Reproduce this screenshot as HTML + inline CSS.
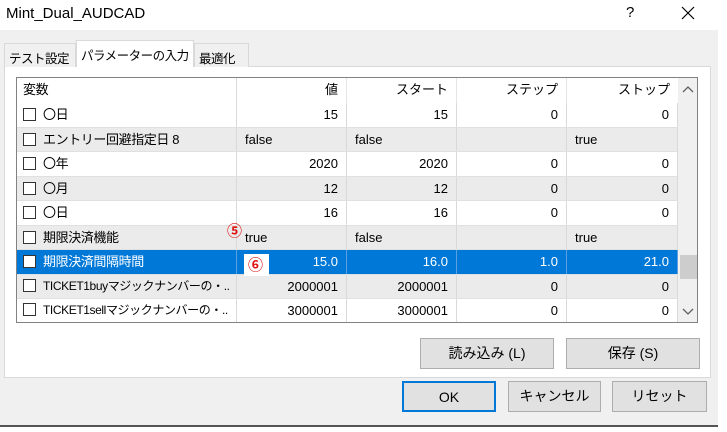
<!DOCTYPE html><html><head><meta charset="utf-8"><style>
*{box-sizing:border-box;margin:0;padding:0}
body{width:727px;height:432px;background:#fff;font-family:"Liberation Sans","Noto Sans CJK JP",sans-serif;font-size:13px;color:#000;position:relative;overflow:hidden}
.a{position:absolute;white-space:nowrap}
.win{left:0;top:30px;width:718px;height:397px;background:#f0f0f0;border-bottom:2px solid #555}
.tab{top:41px;height:26px;border:1px solid #d9d9d9;border-bottom:none;background:#f0f0f0;padding:4px 4px;font-size:12.5px;letter-spacing:-0.5px;overflow:hidden}
.page{left:4px;top:66px;width:707px;height:312px;background:#fff;border:1px solid #d9d9d9}
.tbl{left:16px;top:77px;width:682px;height:246px;border:1px solid #828282;background:#fff;overflow:hidden}
.row{position:absolute;left:0;width:661px;height:24.5px;border-bottom:1px solid #e0e0e0}
.row div{position:absolute;top:0;height:100%;line-height:23px;padding:0 8px;border-right:1px solid #d9d9d9;white-space:nowrap;overflow:hidden}
.c0{left:0;width:220px;letter-spacing:-0.4px;padding-left:6px!important}.c1{left:220px;width:110px;text-align:right}.c2{left:330px;width:110px;text-align:right}.c3{left:440px;width:110px;text-align:right}.c4{left:550px;width:111px;text-align:right}
.l{text-align:left!important}
.cb{display:inline-block;width:13px;height:13px;border:1px solid #333;background:#fff;vertical-align:-2px;margin-right:7px}
.g{background:#ebebeb}.s{background:#0078d7;color:#fff}.s div{border-color:#5aa0e0}
.btn{background:#e1e1e1;border:1px solid #adadad;text-align:center;line-height:28px;font-size:14px}
.red{color:#e01010;font-size:15px;font-weight:bold}
</style></head><body>
<div class="a" style="left:6px;top:5px;font-size:15px">Mint_Dual_AUDCAD</div>
<div class="a" style="left:626px;top:4px;font-size:15px">?</div>
<svg class="a" style="left:681px;top:6px" width="14" height="14"><path d="M1 1L13 13M13 1L1 13" stroke="#000" stroke-width="1.2"/></svg>
<div class="a win"></div>
<div class="a page"></div>
<div class="a tab" style="left:4px;width:72px;top:43px;height:24px">テスト設定</div>
<div class="a tab" style="left:76px;width:118px;top:40px;height:27px;background:#fff">パラメーターの入力</div>
<div class="a tab" style="left:194px;width:55px;top:43px;height:24px">最適化</div>
<div class="a tbl">
<div class="row" style="top:0;height:25px;border-bottom:none"><div class="c0">変数</div><div class="c1" style="border-right:1px solid #e5e5e5">値</div><div class="c2" style="border-right:1px solid #e5e5e5">スタート</div><div class="c3" style="border-right:1px solid #e5e5e5">ステップ</div><div class="c4" style="border:none">ストップ</div></div>
<div class="row" style="top:25px"><div class="c0"><span class="cb"></span>〇日</div><div class="c1">15</div><div class="c2">15</div><div class="c3">0</div><div class="c4">0</div></div>
<div class="row g" style="top:49.5px"><div class="c0"><span class="cb"></span>エントリー回避指定日 8</div><div class="c1 l">false</div><div class="c2 l">false</div><div class="c3"></div><div class="c4 l">true</div></div>
<div class="row" style="top:74px"><div class="c0"><span class="cb"></span>〇年</div><div class="c1">2020</div><div class="c2">2020</div><div class="c3">0</div><div class="c4">0</div></div>
<div class="row g" style="top:98.5px"><div class="c0"><span class="cb"></span>〇月</div><div class="c1">12</div><div class="c2">12</div><div class="c3">0</div><div class="c4">0</div></div>
<div class="row" style="top:123px"><div class="c0"><span class="cb"></span>〇日</div><div class="c1">16</div><div class="c2">16</div><div class="c3">0</div><div class="c4">0</div></div>
<div class="row g" style="top:147.5px"><div class="c0"><span class="cb"></span>期限決済機能</div><div class="c1 l">true</div><div class="c2 l">false</div><div class="c3"></div><div class="c4 l">true</div></div>
<div class="row s" style="top:172px"><div class="c0"><span class="cb"></span>期限決済間隔時間</div><div class="c1">15.0</div><div class="c2">16.0</div><div class="c3">1.0</div><div class="c4">21.0</div></div>
<div class="row g" style="top:196.5px"><div class="c0" style="font-size:12px"><span class="cb"></span>TICKET1buyマジックナンバーの・..</div><div class="c1">2000001</div><div class="c2">2000001</div><div class="c3">0</div><div class="c4">0</div></div>
<div class="row" style="top:221px"><div class="c0" style="font-size:12px"><span class="cb"></span>TICKET1sellマジックナンバーの・..</div><div class="c1">3000001</div><div class="c2">3000001</div><div class="c3">0</div><div class="c4">0</div></div>
<div class="a" style="left:661px;top:0;width:19px;height:246px;background:#f0f0f0"></div>
<div class="a" style="left:663px;top:177px;width:17px;height:24px;background:#cdcdcd"></div>
<svg class="a" style="left:665px;top:8px" width="12" height="8"><path d="M1 6L6 1L11 6" fill="none" stroke="#606060" stroke-width="1.3"/></svg>
<svg class="a" style="left:665px;top:230px" width="12" height="8"><path d="M1 1L6 6L11 1" fill="none" stroke="#606060" stroke-width="1.3"/></svg>
</div>
<div class="a" style="left:244px;top:254px;width:25px;height:22px;background:#fff"></div>
<div class="a red" style="left:248px;top:254px">⑥</div>
<div class="a red" style="left:227px;top:220px">⑤</div>
<div class="a btn" style="left:420px;top:338px;width:134px;height:31px">読み込み (L)</div>
<div class="a btn" style="left:566px;top:338px;width:134px;height:31px">保存 (S)</div>
<div class="a btn" style="left:402px;top:381px;width:94px;height:31px;border:2px solid #0078d7">OK</div>
<div class="a btn" style="left:508px;top:381px;width:93px;height:31px">キャンセル</div>
<div class="a btn" style="left:612px;top:381px;width:95px;height:31px">リセット</div>
</body></html>
